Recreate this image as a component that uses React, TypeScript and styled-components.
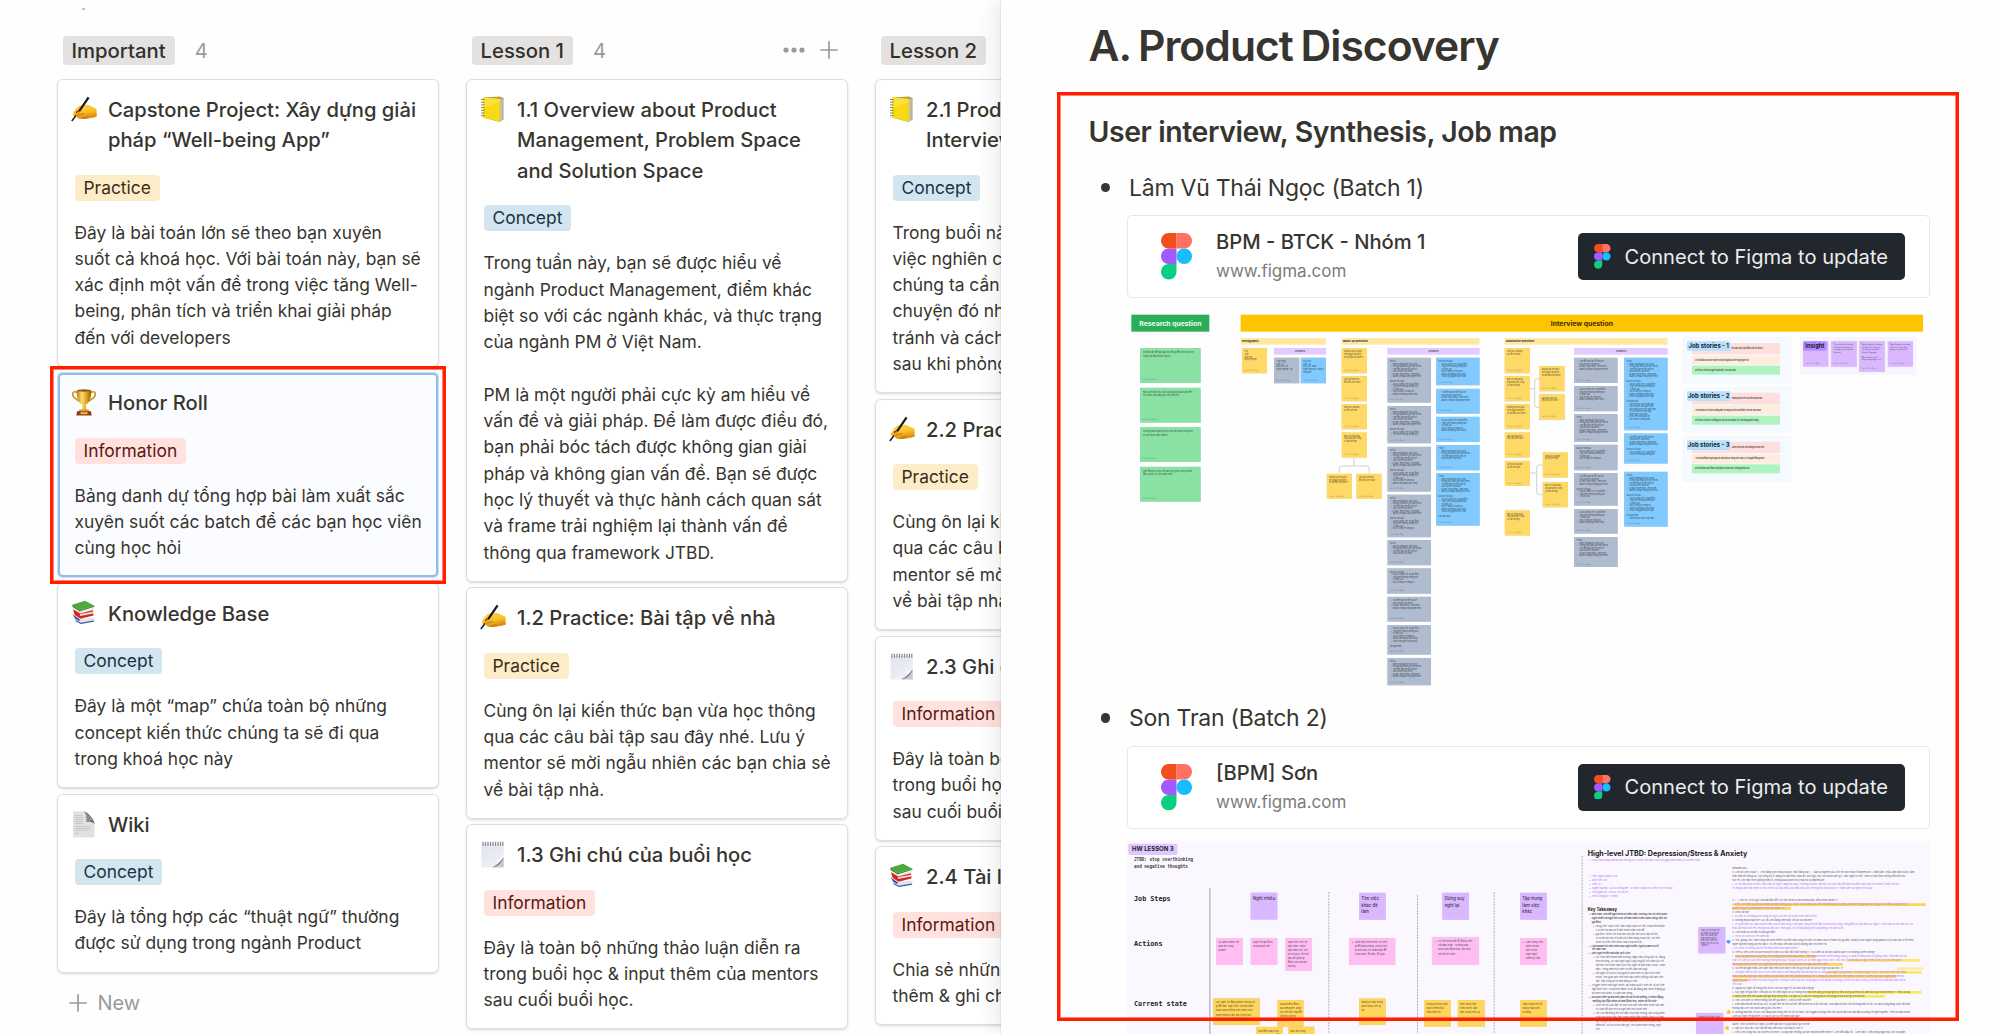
import React from "react";
import styled, { createGlobalStyle } from "styled-components";

const GlobalStyle = createGlobalStyle`
  * { box-sizing: border-box; }
  html, body { margin: 0; padding: 0; background: #fff; overflow: hidden; }
  body {
    font-family: Inter, "Liberation Sans", sans-serif;
    color: #37352f;
    -webkit-font-smoothing: antialiased;
  }
  p, h1, h2, h3, ul { margin: 0; padding: 0; font-weight: inherit; }
`;

/* ---------- shell ---------- */

const Screen = styled.main`
  display: flex;
  width: 2000px;
  height: 1034px;
  overflow: hidden;
  background: #fefefe;
  position: relative;
`;

const BoardPane = styled.section`
  flex: 0 0 1001px;
  display: flex;
  gap: 27px;
  padding: 36px 0 0 57px;
  height: 1034px;
  overflow: hidden;
`;

const DocPane = styled.section`
  flex: 1;
  position: relative;
  background: #fefefe;
  height: 1034px;
  padding: 20px 70.5px 0 87.5px;
  display: flex;
  flex-direction: column;
  box-shadow: 0 0 2px rgba(15, 15, 15, 0.16), -4px 0 22px rgba(15, 15, 15, 0.09);
`;

const Marker = styled.div<{ $x: number; $y: number; $w: number; $h: number }>`
  position: absolute;
  left: ${(p) => p.$x}px;
  top: ${(p) => p.$y}px;
  width: ${(p) => p.$w}px;
  height: ${(p) => p.$h}px;
  border: 3px solid #ff1e00;
  outline: 1px solid rgba(255, 30, 0, 0.55);
  outline-offset: -4px;
  pointer-events: none;
`;

const Speck = styled.span`
  position: absolute;
  left: 82px;
  top: 8px;
  width: 3px;
  height: 2px;
  background: #c4c4c4;
`;

/* ---------- kanban board ---------- */

const Column = styled.div`
  flex: 0 0 382px;
  display: flex;
  flex-direction: column;
`;

const ColumnHead = styled.header`
  display: flex;
  align-items: center;
  height: 28.5px;
  margin: 0 6px 14px 5.5px;
  color: #9b9a97;
`;

const ColumnName = styled.span`
  background: #e3e2e0;
  color: #32302c;
  border-radius: 4px;
  height: 28.5px;
  line-height: 29px;
  padding: 0 9px;
  font-size: 20.3px;
  font-weight: 500;
  white-space: nowrap;
`;

const Count = styled.span`
  font-size: 20.3px;
  margin-left: 20px;
  color: #9b9a97;
`;

const HeadActions = styled.span`
  margin-left: auto;
  display: flex;
  align-items: center;
  gap: 15px;
  margin-right: 4px;
`;

const Stack = styled.div`
  display: flex;
  flex-direction: column;
  gap: 5.4px;
`;

const Card = styled.article<{ $selected?: boolean }>`
  flex: none;
  background: ${(p) => (p.$selected ? "#fbfcff" : "#fff")};
  border-radius: 6px;
  padding: 16px 10px 16px 17.5px;
  box-shadow: ${(p) =>
    p.$selected
      ? "inset 0 0 0 1px #d9dee6, inset 0 0 0 3px #8fbcee"
      : "inset 0 0 0 1px #dededd, 0 1px 2px rgba(15,15,15,0.13), 0 2px 5px rgba(15,15,15,0.03)"};
`;

const TitleRow = styled.div`
  display: flex;
  align-items: flex-start;
  margin-left: -3.5px;
`;

const IconSlot = styled.span`
  flex: 0 0 37px;
  height: 30.8px;
  padding-top: 1px;
  display: block;
`;

const CardTitle = styled.h3`
  font-size: 20.2px;
  line-height: 30.8px;
  font-weight: 500;
  white-space: pre;
`;

const tones = {
  Practice: ["#fdecc8", "#402c1b"],
  Concept: ["#d3e5ef", "#183347"],
  Information: ["#ffe2dd", "#5d1715"],
} as const;
type Tone = keyof typeof tones;

const Tag = styled.span<{ $tone: Tone }>`
  display: block;
  width: max-content;
  height: 26px;
  line-height: 26.5px;
  padding: 0 9px;
  margin: 18.5px 0 19px;
  border-radius: 4px;
  font-size: 17.4px;
  background: ${(p) => tones[p.$tone][0]};
  color: ${(p) => tones[p.$tone][1]};
`;

const Desc = styled.p`
  font-size: 17.42px;
  line-height: 26.3px;
  white-space: pre;
`;

const NewButton = styled.div`
  display: flex;
  align-items: center;
  gap: 11px;
  height: 30px;
  margin: 15px 0 0 11.5px;
  font-size: 20px;
  color: #9b9a97;
`;

/* ---------- icons ---------- */

const Plus = () => (
  <svg width="18" height="18" viewBox="0 0 18 18" stroke="#9b9a97" strokeWidth="1.7" fill="none">
    <path d="M9 0.3V17.7M0.3 9H17.7" />
  </svg>
);

const Dots = () => (
  <svg width="22" height="6" viewBox="0 0 22 6" fill="#9b9a97">
    <circle cx="3" cy="3" r="2.6" />
    <circle cx="11" cy="3" r="2.6" />
    <circle cx="19" cy="3" r="2.6" />
  </svg>
);

const HandIcon = () => (
  <svg width="27" height="26" viewBox="0 0 27 26">
    <defs>
      <linearGradient id="skin" x1="0" y1="0" x2="0.3" y2="1">
        <stop offset="0" stopColor="#ffd54a" />
        <stop offset="0.6" stopColor="#fcbf26" />
        <stop offset="1" stopColor="#d98a12" />
      </linearGradient>
    </defs>
    <path
      d="M2 18.4C2.6 15.2 5.6 11.6 8.6 9.6c1.200-.8 2.500-.5 2.700.4 1.800-1 4.400-1.800 6.300-1.100 2.800 1 5.400 3 7.900 3.900l.3 7.700c-1.800 1.100-4.200.9-6.200 1.600-3.800 1.200-8.400 1.100-11.900.3-1.300-.4-2-1.400-1.900-2.300-1.700.1-3.700-.1-3.800-1.700z"
      fill="url(#skin)"
    />
    <path d="M6 20c2-1.600 4.600-2.200 7.200-2.300M11.500 22.300c1.800-.4 3.600-1 5-1.900" stroke="#b86b10" strokeWidth=".9" fill="none" />
    <path d="M17.600 1.300 8.400 14.800l-2.900 2.400" stroke="#1b1b1d" strokeWidth="2.300" fill="none" />
    <path d="M5 19.500.8 25" stroke="#1b1b1d" strokeWidth="1.500" fill="none" />
    <path d="M8.500 15.500c-1.700.9-3 2.300-3.800 3.700" stroke="#e69a17" strokeWidth="1.800" fill="none" />
  </svg>
);

const NotebookIcon = () => (
  <svg width="26" height="27" viewBox="0 0 26 27">
    <path d="M3 1.500 20 .5l4 1.800v21L19.500 26 3 21.500z" fill="#b9a23a" />
    <path d="M19.600 3.300 24 2.200v21L19.700 26z" fill="#d9d4bd" />
    <path d="m21 3 0 22M22.600 2.600v21.500" stroke="#8d8871" strokeWidth=".5" />
    <path d="M3 1.200 19.800 3v22.700L3 21.600z" fill="#f7da14" />
    <path d="M3 1.200 19.800 3v3L3 12z" fill="#fbe64a" opacity=".7" />
    <path
      d="M1 3.500h3.600M1 6.200h3.600M1 8.900h3.600M1 11.600h3.600M1 14.300h3.600M1 17h3.600M1 19.700h3.600"
      stroke="#8f8450"
      strokeWidth="1"
    />
  </svg>
);

const TrophyIcon = () => (
  <svg width="26" height="27" viewBox="0 0 26 27">
    <defs>
      <linearGradient id="gold" x1="0" x2="1">
        <stop offset="0" stopColor="#b9780f" />
        <stop offset=".35" stopColor="#fbe26b" />
        <stop offset=".7" stopColor="#dd9d1c" />
        <stop offset="1" stopColor="#9a5d08" />
      </linearGradient>
    </defs>
    <path d="M6.500 3.500C3 1.800 1 3.300 1.800 6.300c.8 3 4 4.600 7.400 6.300M19.500 3.500C23 1.800 25 3.300 24.200 6.300c-.8 3-4 4.600-7.400 6.300" fill="none" stroke="#c98d1b" strokeWidth="1.500" />
    <path d="M5.800 1.200h14.400c.3 6.500-1.200 12-5.500 14.600l.6 5.200h-4.600l.6-5.200C7 13.200 5.500 7.700 5.800 1.200z" fill="url(#gold)" />
    <ellipse cx="13" cy="1.500" rx="7.200" ry="1.200" fill="#8f5a0b" />
    <path d="M8.200 20.500h9.600l.8 2H7.400z" fill="#d79a22" />
    <path d="M6 22.300h14l.7 4.200H5.300z" fill="#8c3f15" />
    <path d="M9.500 23.200h7v2h-7z" fill="#e9bd4a" />
  </svg>
);

const BooksIcon = () => (
  <svg width="26" height="25" viewBox="0 0 26 25">
    <path d="M2 15.500 4.500 21l5 2.600L23.500 21v-3.400L9 19z" fill="#dfe3ea" />
    <path d="M1.800 14.500 9 19.500l-.6 1.500-4-2zM4.500 21.200 10 24l12.800-2.200V20.600L10 22.700l-5-2.500z" fill="#39579f" />
    <path d="M2.300 9.500 9 13l13.500-2.500v4.300L9.700 18 3.600 13.500z" fill="#e9e1de" />
    <path d="M2 9.200 9 12l13-2v1.800L9.200 14 8.800 16l13.600-2.400v1.900L9.500 18.700 3.600 15z" fill="#d8251f" />
    <path d="M1.500 5.500 8 11.700l14.800-4.300V10L9 13.500 2 9z" fill="#e6efe2" />
    <path d="M1.200 4.700 14 .8l9.400 5L9 10.200z" fill="#4fa83d" />
    <path d="M1.200 4.700 9 10.200v1.400L1.700 7z" fill="#2f7d26" />
    <path d="m9 10.200 14.400-4.400v.9L9 11.300z" fill="#2f7d26" />
  </svg>
);

const PageIcon = () => (
  <svg width="26" height="27" viewBox="0 0 26 27">
    <path d="M2 .5h11.500c4 1.600 9 7.500 10 12.200v13.800H2z" fill="#e1e1e1" />
    <path d="M13.300.5c2.500 3.200 2.600 7.200 2.300 10.300 3-.8 6.500 0 8 2.400C23 8 17.500 1.800 13.300.5z" fill="#5f5f5f" />
    <path d="M13.300.5c2.500 3.200 2.600 7.200 2.300 10.300L22 9.500C20 5.500 16.500 1.800 13.300.5z" fill="#8d8d8d" />
    <path d="M4 4.500h8M4 6.500h8.500M4 8.500h8.500M4 10.500h8.500M4 12.500h8M4 15.500h15M4 17.500h16M4 19h12M4 22.300h4" stroke="#bdbdbd" strokeWidth=".7" />
  </svg>
);

const NotepadIcon = () => (
  <svg width="26" height="27" viewBox="0 0 26 27">
    <defs>
      <linearGradient id="sheet" x1="0" y1="0" x2=".6" y2="1">
        <stop offset="0" stopColor="#dfe5ec" />
        <stop offset="1" stopColor="#eef0f4" />
      </linearGradient>
    </defs>
    <path d="M1.500 3h22.300v14L14 26.500H1.500z" fill="url(#sheet)" />
    <path d="M23.800 17v9.500H13z" fill="#c6cad0" />
    <path d="M23.800 16.500c-2 1.400-4 1.700-6.500 1.800.2 3-1.500 6.500-5 8.200 5.800-1 9.500-5.200 11.500-10z" fill="#6d737c" />
    <path d="M23.800 15.800c-2 1.600-4.300 2.200-7 2.300.5 2.600-.8 6-4.500 8.200 4.700-2 8.500-5.600 11.500-10.500z" fill="#f8f9fb" />
    <path d="M3 .8v4M5.500.8v4M8 .8v4M10.500.8v4M13 .8v4M15.500.8v4M18 .8v4M20.500.8v4M22.800.8v4" stroke="#85898f" strokeWidth="1.200" />
  </svg>
);

const icons = {
  hand: HandIcon,
  notebook: NotebookIcon,
  trophy: TrophyIcon,
  books: BooksIcon,
  page: PageIcon,
  notepad: NotepadIcon,
};

const FigmaLogo = ({ width }: { width: number }) => (
  <svg width={width} height={width * 1.5} viewBox="0 0 200 300">
    <path d="M50 300c27.600 0 50-22.400 50-50v-50H50c-27.600 0-50 22.400-50 50s22.400 50 50 50z" fill="#0acf83" />
    <path d="M0 150c0-27.600 22.400-50 50-50h50v100H50c-27.600 0-50-22.400-50-50z" fill="#a259ff" />
    <path d="M0 50C0 22.400 22.400 0 50 0h50v100H50C22.400 100 0 77.600 0 50z" fill="#f24e1e" />
    <path d="M100 0h50c27.600 0 50 22.400 50 50s-22.400 50-50 50h-50V0z" fill="#ff7262" />
    <path d="M200 150c0 27.600-22.400 50-50 50s-50-22.400-50-50 22.400-50 50-50 50 22.400 50 50z" fill="#1abcfe" />
  </svg>
);

/* ---------- kanban data ---------- */

type CardData = { icon: keyof typeof icons; title: string; tag: Tone; text: string; selected?: boolean };

const columns: { name: string; count?: number; actions?: boolean; add?: boolean; cards: CardData[] }[] = [
  {
    name: "Important",
    count: 4,
    add: true,
    cards: [
      {
        icon: "hand",
        title: "Capstone Project: Xây dựng giải\npháp “Well-being App”",
        tag: "Practice",
        text: "Đây là bài toán lớn sẽ theo bạn xuyên\nsuốt cả khoá học. Với bài toán này, bạn sẽ\nxác định một vấn đề trong việc tăng Well-\nbeing, phân tích và triển khai giải pháp\nđến với developers",
      },
      {
        icon: "trophy",
        title: "Honor Roll",
        tag: "Information",
        selected: true,
        text: "Bảng danh dự tổng hợp bài làm xuất sắc\nxuyên suốt các batch để các bạn học viên\ncùng học hỏi",
      },
      {
        icon: "books",
        title: "Knowledge Base",
        tag: "Concept",
        text: "Đây là một “map” chứa toàn bộ những\nconcept kiến thức chúng ta sẽ đi qua\ntrong khoá học này",
      },
      {
        icon: "page",
        title: "Wiki",
        tag: "Concept",
        text: "Đây là tổng hợp các “thuật ngữ” thường\nđược sử dụng trong ngành Product",
      },
    ],
  },
  {
    name: "Lesson 1",
    count: 4,
    actions: true,
    cards: [
      {
        icon: "notebook",
        title: "1.1 Overview about Product\nManagement, Problem Space\nand Solution Space",
        tag: "Concept",
        text: "Trong tuần này, bạn sẽ được hiểu về\nngành Product Management, điểm khác\nbiệt so với các ngành khác, và thực trạng\ncủa ngành PM ở Việt Nam.\n\nPM là một người phải cực kỳ am hiểu về\nvấn đề và giải pháp. Để làm được điều đó,\nbạn phải bóc tách được không gian giải\npháp và không gian vấn đề. Bạn sẽ được\nhọc lý thuyết và thực hành cách quan sát\nvà frame trải nghiệm lại thành vấn đề\nthông qua framework JTBD.",
      },
      {
        icon: "hand",
        title: "1.2 Practice: Bài tập về nhà",
        tag: "Practice",
        text: "Cùng ôn lại kiến thức bạn vừa học thông\nqua các câu bài tập sau đây nhé. Lưu ý\nmentor sẽ mời ngẫu nhiên các bạn chia sẻ\nvề bài tập nhà.",
      },
      {
        icon: "notepad",
        title: "1.3 Ghi chú của buổi học",
        tag: "Information",
        text: "Đây là toàn bộ những thảo luận diễn ra\ntrong buổi học & input thêm của mentors\nsau cuối buổi học.",
      },
    ],
  },
  {
    name: "Lesson 2",
    cards: [
      {
        icon: "notebook",
        title: "2.1 Product\nInterview",
        tag: "Concept",
        text: "Trong buổi này\nviệc nghiên cứu\nchúng ta cần\nchuyện đó như\ntránh và cách\nsau khi phỏng",
      },
      {
        icon: "hand",
        title: "2.2 Practice",
        tag: "Practice",
        text: "Cùng ôn lại kiến\nqua các câu bài\nmentor sẽ mời\nvề bài tập nhà.",
      },
      {
        icon: "notepad",
        title: "2.3 Ghi chú",
        tag: "Information",
        text: "Đây là toàn bộ\ntrong buổi học\nsau cuối buổi",
      },
      { icon: "books", title: "2.4 Tài liệu", tag: "Information", text: "Chia sẻ những\nthêm & ghi chú" },
    ],
  },
];

const NextCardEdge = styled.div`
  flex: none;
  height: 40px;
  border-radius: 6px;
  background: #fff;
  box-shadow: inset 0 0 0 1px #dededd;
`;

/* ---------- document ---------- */

const DocTitle = styled.h1`
  font-size: 42.6px;
  line-height: 52px;
  height: 52px;
  font-weight: 600;
  letter-spacing: -1px;
  word-spacing: -2px;
  white-space: nowrap;
`;

const DocSubtitle = styled.h2`
  font-size: 28.4px;
  line-height: 36px;
  height: 36px;
  font-weight: 600;
  letter-spacing: -0.4px;
  margin-top: 42px;
  white-space: nowrap;
`;

const Bullet = styled.p<{ $top: number }>`
  display: flex;
  align-items: center;
  height: 34px;
  margin: ${(p) => p.$top}px 0 10.5px 12px;
  font-size: 23px;
  line-height: 34px;
  letter-spacing: -0.25px;
  white-space: nowrap;
  &::before {
    content: "";
    width: 9.5px;
    height: 9.5px;
    border-radius: 50%;
    background: #37352f;
    margin-right: 19px;
  }
`;

const LinkCard = styled.div`
  flex: none;
  display: flex;
  align-items: center;
  height: 83px;
  margin-left: 38px;
  padding: 0 24px 0 33px;
  border: 1.5px solid #e6e6e5;
  border-radius: 5px;
  background: #fff;
`;

const LinkText = styled.div`
  margin-left: 24.5px;
  display: flex;
  flex-direction: column;
  gap: 3px;
`;

const LinkTitle = styled.span`
  font-size: 20.2px;
  line-height: 26px;
  font-weight: 500;
`;

const LinkHost = styled.span`
  font-size: 17px;
  line-height: 26px;
  color: #7d7c79;
`;

const ConnectButton = styled.span`
  margin-left: auto;
  display: flex;
  align-items: center;
  gap: 14px;
  width: 327px;
  height: 47px;
  padding-left: 16.5px;
  border-radius: 5px;
  background: #22272d;
  color: #ededed;
  font-size: 20.1px;
  white-space: nowrap;
`;

const Embed = styled.div<{ $h: number; $bg: string }>`
  flex: none;
  position: relative;
  height: ${(p) => p.$h}px;
  margin: 12.5px 0 0 38px;
  overflow: hidden;
  background: ${(p) => p.$bg};
`;

/* Whiteboards are laid out on a large canvas and shown at one third. */
const Canvas = styled.div<{ $ox: number; $oy: number }>`
  position: absolute;
  left: 0;
  top: 0;
  width: 2600px;
  height: 1200px;
  transform-origin: 0 0;
  transform: scale(0.33333) translate(${(p) => -p.$ox}px, ${(p) => -p.$oy}px);
`;

type Box = { $x: number; $y: number; $w: number; $h: number; $c?: string };

const Note = styled.div<Box & { $size?: number; $pad?: number; $lh?: number; $fixed?: boolean; $ink?: string }>`
  position: absolute;
  left: ${(p) => p.$x}px;
  top: ${(p) => p.$y}px;
  width: ${(p) => p.$w}px;
  height: ${(p) => p.$h}px;
  background: ${(p) => p.$c};
  padding: ${(p) => p.$pad ?? 7}px;
  font-size: ${(p) => p.$size ?? 6.4}px;
  line-height: ${(p) => (p.$lh ? `${p.$lh}px` : 1.25)};
  font-weight: 500;
  color: ${(p) => p.$ink ?? "rgba(30, 30, 30, 0.72)"};
  white-space: ${(p) => (p.$fixed ? "pre" : "pre-line")};
  box-shadow: 0 0 3px rgba(0, 0, 0, 0.12);
`;

const Author = styled.span`
  position: absolute;
  left: 7px;
  bottom: 5px;
  font-size: 5px;
  color: rgba(30, 30, 30, 0.42);
`;

const Band = styled.div<Box & { $size: number; $fg?: string; $align?: string; $r?: number; $pad?: number }>`
  position: absolute;
  left: ${(p) => p.$x}px;
  top: ${(p) => p.$y}px;
  width: ${(p) => p.$w}px;
  height: ${(p) => p.$h}px;
  line-height: ${(p) => p.$h}px;
  background: ${(p) => p.$c};
  font-size: ${(p) => p.$size}px;
  font-weight: 700;
  color: ${(p) => p.$fg ?? "#222"};
  text-align: ${(p) => p.$align ?? "center"};
  border-radius: ${(p) => p.$r ?? 0}px;
  padding: 0 ${(p) => p.$pad ?? 0}px;
  white-space: nowrap;
`;

const CanvasText = styled.div<{ $x: number; $y: number; $size: number; $mono?: boolean; $c?: string; $b?: number; $lh?: number }>`
  position: absolute;
  left: ${(p) => p.$x}px;
  top: ${(p) => p.$y}px;
  font-size: ${(p) => p.$size}px;
  line-height: ${(p) => p.$lh ?? 20}px;
  font-family: ${(p) => (p.$mono ? '"DejaVu Sans Mono", "Liberation Mono", monospace' : "Inter, sans-serif")};
  font-weight: ${(p) => p.$b ?? 400};
  color: ${(p) => p.$c ?? "#222"};
  white-space: pre;
`;

/* A column of text lines; each line keeps its own indent and colour. */
const Lines = styled.div<{ $x: number; $y: number; $size: number }>`
  position: absolute;
  left: ${(p) => p.$x}px;
  top: ${(p) => p.$y}px;
  display: flex;
  flex-direction: column;
  align-items: flex-start;
  font-size: ${(p) => p.$size}px;
  white-space: pre;
`;

const Line = styled.span<{ $c: string; $b?: boolean; $in?: number; $lh?: number }>`
  height: ${(p) => p.$lh ?? 12}px;
  line-height: ${(p) => p.$lh ?? 12}px;
  padding-left: ${(p) => p.$in ?? 0}px;
  color: ${(p) => p.$c};
  font-weight: ${(p) => (p.$b ? 600 : 400)};
`;

const Rule = styled.div<{ $x: number; $y: number; $h: number; $solid?: boolean }>`
  position: absolute;
  left: ${(p) => p.$x}px;
  top: ${(p) => p.$y}px;
  height: ${(p) => p.$h}px;
  border-left: ${(p) => (p.$solid ? "5px solid #c4c2c8" : "3px dashed #b3b1b8")};
`;

const Overlay = styled.svg`
  position: absolute;
  left: 0;
  top: 0;
`;

const Y = "#ffd966";
const GR = "#afbccf";
const BL = "#80caff";
const GN = "#8ae1a4";
const PU = "#d9b8ff";
const PK = "#ffbdf2";

const q = [
  "Những câu hỏi giúp\nhiểu người dùng khi\nhọ bắt đầu thói quen?",
  "Lần cuối bạn làm\nđiều đó là khi nào?",
  "Cảm xúc của bạn\nlúc đó thế nào?",
  "Bạn có từng dùng\nứng dụng hay công\ncụ nào không?",
];

const answerLines = [
  "Trả lời:",
  "  •  Mình thường khó tập trung",
  "  •  Không ngủ được khi nghĩ nhiều",
  "  •  Tìm đến bạn bè để chia sẻ",
  "      câu chuyện của mình",
  "  •  Đi dạo, nghe nhạc, xem phim",
  "  •  Muốn có người lắng nghe mình",
  "",
  "Sau khi trải qua:",
  "  •  Áp lực công việc và gia đình",
  "  •  Thử thiền nhưng không duy",
  "      trì được lâu",
  "  •  Hay lo lắng về tương lai",
  "  •  Muốn cân bằng cuộc sống",
  "  •  Chưa từng gặp chuyên gia",
  "",
  "Lần gần nhất:",
  "  •  Tập thể dục thấy thoải mái",
  "  •  Nói chuyện với người thân",
  "  •  Đọc sách phát triển bản thân",
  "      và viết nhật ký mỗi ngày",
  "  •  Nghỉ ngơi cuối tuần",
  "  •  Đi du lịch cùng bạn bè",
  "  •  Học thêm kỹ năng mới",
];

const clip = (h: number, i: number) => {
  const n = Math.max(3, Math.floor((h - 26) / 7.5));
  const start = h > 100 ? 0 : [0, 8, 3, 9][i % 4];
  return answerLines.slice(start, start + (h < 80 ? Math.min(n, 5) : n)).join("\n");
};

const research: [number, string][] = [
  [142, "Những vấn đề nào gây tác động đến thói quen tin\ncông của đa số mọi người?"],
  [261, "Đâu là những nhu cầu người dùng quan tâm đến\nkhi muốn cân bằng lại cuộc đời họ?"],
  [379, "Những quan ngại gì sẽ là cản trở người dùng duy\ntrì thói quen lành mạnh?"],
  [498, "Cần động lực như thế nào thì người dùng sẽ bắt\nđầu và duy trì thói quen mới?"],
];

const yellow: [number, number][] = [
  [695, 142], [695, 226], [695, 310], [695, 395], [650, 519], [739, 519],
  [1184, 142], [1184, 226], [1184, 310], [1184, 395], [1184, 480], [1184, 629],
  [1288, 196], [1288, 281], [1298, 455], [1298, 544],
];

const answers: [number, number, number, string][] = [
  [832, 171, 135, GR], [832, 316, 112, GR], [832, 438, 135, GR], [832, 582, 128, GR], [832, 718, 76, GR],
  [832, 803, 76, GR], [832, 888, 75, GR], [832, 973, 89, GR], [832, 1072, 82, GR],
  [978, 171, 83, BL], [978, 264, 75, BL], [978, 348, 76, BL], [978, 433, 76, BL], [978, 517, 158, BL],
  [1392, 171, 76, GR], [1392, 256, 76, GR], [1392, 340, 84, GR], [1392, 432, 77, GR], [1392, 517, 98, GR],
  [1392, 625, 74, GR], [1392, 709, 90, GR],
  [1542, 171, 218, BL], [1542, 398, 91, BL], [1542, 513, 165, BL],
];

const stories: { y: number; h: number; rows: [number, number, string, string, number][] }[] = [
  {
    y: 111, h: 134,
    rows: [
      [127, 34, "#ffdfdd", "tôi cảm thấy cần được hỗ trợ tâm lý", 118],
      [165, 27, "#ffecdc", "Để tôi được chia sẻ và kết nối với người có thể lắng nghe tôi", 10],
      [195, 27, "#aff4c0", "Để tôi có thể suy nghĩ thoải mái, tích cực hơn", 10],
    ],
  },
  {
    y: 261, h: 133,
    rows: [
      [276, 35, "#ffdfdd", "muốn phát triển và hiểu mình hơn", 120],
      [314, 28, "#ffecdc", "Tôi muốn có lộ trình hướng dẫn rõ ràng và theo dõi được tiến bộ của mình", 10],
      [345, 27, "#aff4c0", "Để tôi có thể duy trì động lực và tạo thói quen tốt, cân bằng cuộc sống", 10],
    ],
  },
  {
    y: 408, h: 134,
    rows: [
      [423, 34, "#ffdfdd", "cảm thấy mất cân bằng khi làm việc", 120],
      [461, 27, "#ffecdc", "Tôi muốn được nghỉ ngơi và sắp xếp lại công việc hợp lý, có người đồng hành", 10],
      [491, 27, "#aff4c0", "Để tôi kiểm soát được thời gian và cảm xúc, không bị quá tải", 10],
    ],
  },
];

const insights = [
  "",
  "Thói quen bị ảnh hưởng\nbởi điều kiện bạn bè và\nsự động viên lớn nhất là\nbản thân",
  "Người dùng có xu hướng\ntìm đến bạn bè khi gặp\nvấn đề và muốn được\nchia sẻ, lắng nghe\n\nMục tiêu lớn: người\ndùng muốn sống vui vẻ",
  "Người dùng có xu hướng\ntránh nói về vấn đề gì\ngiống với người thân",
];

const InterviewBoard = () => (
  <Embed $h={380} $bg="#fefefe">
    <Canvas $ox={51} $oy={31}>
      <Band $x={64} $y={42} $w={234} $h={51} $c="#2bae57" $size={20.500} $fg="#e9fff0">Research question</Band>
      <Band $x={392} $y={42} $w={2047} $h={51} $c="#ffc400" $size={20.500} $fg="#3a2e08">Interview question</Band>
      {research.map(([y, t]) => (
        <Note key={y} $x={90} $y={y} $w={182} $h={105} $c={GN} $size={6.500} $pad={9} $lh={10} $fixed>
          {t}
          <Author>Lâm Vũ Thái Ngọc</Author>
        </Note>
      ))}
      <Band $x={392} $y={112} $w={255} $h={20} $c="#ffe8a0" $size={7.800} $align="left" $pad={3}>Demographic</Band>
      <Band $x={695} $y={112} $w={413} $h={20} $c="#ffe8a0" $size={7.800} $align="left" $pad={3}>Warm-up questions</Band>
      <Band $x={1184} $y={112} $w={488} $h={20} $c="#ffe8a0" $size={7.800} $align="left" $pad={3}>Substantive questions</Band>
      <Band $x={492} $y={142} $w={156} $h={20} $c="#e3cbff" $size={7.200} $fg="#5a5066">Answers</Band>
      <Band $x={832} $y={142} $w={277} $h={20} $c="#e3cbff" $size={7.200} $fg="#5a5066">Answers</Band>
      <Band $x={1392} $y={142} $w={281} $h={20} $c="#e3cbff" $size={7.200} $fg="#5a5066">Answers</Band>
      <Note $x={396} $y={142} $w={75} $h={76} $c={Y} $size={6} $lh={8} $fixed>{"Tên\nTuổi\nGiới tính\nNghề nghiệp"}<Author>Lâm Vũ Thái Ngọc</Author></Note>
      <Note $x={492} $y={171} $w={76} $h={77} $c={GR} $size={6} $lh={8} $fixed>{"Thu Hằng\nTuổi: 25\nGiới tính: Nữ\nNghề nghiệp: HR"}<Author>Lâm Vũ Thái Ngọc</Author></Note>
      <Note $x={572} $y={171} $w={76} $h={77} $c={BL} $size={6} $lh={8} $fixed>{"Duy Anh\nTuổi: 28\nGiới tính: Nam\nNghề nghiệp: Product\nDesigner"}<Author>Lâm Vũ Thái Ngọc</Author></Note>
      {yellow.map(([x, y], i) => (
        <Note key={i} $x={x} $y={y} $w={76} $h={76} $c={Y} $size={5.600} $lh={8} $fixed>
          {q[i % q.length]}
          <Author>Lâm Vũ Thái Ngọc</Author>
        </Note>
      ))}
      {answers.map(([x, y, h, c], i) => (
        <Note key={i} $x={x} $y={y} $w={131} $h={h} $c={c} $size={5.800} $lh={7.500} $fixed>
          {clip(h, i)}
          <Author>Lâm Vũ Thái Ngọc</Author>
        </Note>
      ))}
      <Overlay width="2600" height="1200" viewBox="0 0 2600 1200" fill="none" stroke="#b9b9b9" strokeWidth="2">
        <path d="M732 472v24M732 496h-36q-8 0-8 8v13M732 496h38q8 0 8 8v13" />
        <path d="M1260 264h14M1288 234h-6q-8 0-8 8v70q0 8 8 8h6" />
        <path d="M1260 517h18M1298 493h-10q-8 0-8 8v72q0 9 8 9h10" />
      </Overlay>
      {stories.map((s, i) => (
        <React.Fragment key={s.y}>
          <Note $x={1721} $y={s.y} $w={320} $h={s.h} $c="#f4faff" />
          {s.rows.map(([y, h, c, t, pad]) => (
            <Band key={y} $x={1746} $y={y} $w={264} $h={h} $c={c} $size={5.600} $pad={pad} $align="left" $fg="#4c4848">
              {t}
            </Band>
          ))}
          <Band $x={1731} $y={s.y + 11} $w={130} $h={29} $c="#b9e1fd" $size={17.800} $r={4} $fg="#10202c">{`Job stories - ${i + 1}`}</Band>
        </React.Fragment>
      ))}
      <Note $x={2071} $y={111} $w={347} $h={110} $c="#f9f5ff" />
      {[2079, 2164, 2248, 2333].map((x, i) => (
        <Note key={x} $x={x} $y={122} $w={76} $h={i === 2 ? 91 : 76} $c={PU} $size={5.200} $lh={7.500} $fixed>
          {insights[i]}
          <Author>Lâm Vũ Thái Ngọc</Author>
        </Note>
      ))}
      <Band $x={2079} $y={122} $w={71} $h={28} $c="#b38dff" $size={17} $r={4} $fg="#1d1238">Insight</Band>
    </Canvas>
  </Embed>
);

const ink = "#5c5a63";
const vio = "#b074f2";

/* Lines of the transcript, top to bottom; an empty string is a blank line. */
const transcript: [string, string][] = [
  [ink, "Detailed Q&A"],
  [ink, "S: Linh ăn cơm chưa? (...) Em đang học khoá product, thầy đang dạy (...) Đây là nghiên cứu Linh về chọn topic ở depression - trầm cảm. Khẩu cảm thấy buồn, cảm"],
  [ink, "thấy mất hết động lực, vui hứng thú ở. Đang thì cảm thấy chán ăn, khó ngủ, học cho muốn làm gì ý. Đây nghe có thể. Theo tư vấn được những điều đó như"],
  [ink, "này thì Linh thấy mình giống nhiều ở, không qua là làm chứ chưa nói là depression."],
  [vio, "L: Ờ. Giờ đặt được là mức trầm cảm tôi nghe càng hợi càng. Thường là buồn, bất mọi thứ cho thấy để tâm mọi điều cảm thận thì chưa ở. Nhiều khi em"],
  [vio, "thì mang cảm thấy mình bị như thế rồi có dấu hiệu của trầm cảm luôn, nhưng mà vẫn là mức tự “trầm cảm” lại nghe nó to quá."],
  [ink, ""],
  [ink, ""],
  [ink, "S: (...) Vậy thì, từ lúc giờ Linh bắt đầu để ý có việc mình bị burn mood xấu, kiểu down mood ý?"],
  [vio, "L: Kiểu Linh hiện ra cảm xúc mình là thất thường quá. Trước kia thì cảm xúc vẫn còn đang bình thường, mà mấy tháng nay nay đúng lúc tôi đều lại nghĩ rồi có"],
  [vio, "ghiền xong rồi lại đúng mình khó luôn được cơ"],
  [ink, "S: Khóc cả hả?"],
  [vio, "L: Ờ, kiểu lúc đó đang xem xong thì nghĩ, hơn liên rồi muốn nước mắt rơi lên"],
  [ink, "S: Nhưng mà tại sao nhỉ? Lúc đó Linh đang xem mấy vở clip vui mà nhỉ?"],
  [vio, "L: Họ phải biểu lúc cấp ra buồn đầu, mà là xem xong 1 thời gian, xong thì bắt đầu tua hơn lớp trong, trong đầu lúc bắt đầu suy nghĩ ý. Kiểu cảm lúc đó cảm xúc nó"],
  [vio, "thay đổi nhịp nhìn lên, nhưng mà kiểu này 1 thời gian, có thì phải đang nổi xong động 1 rồi luôn luôn."],
  [ink, "S: Linh nhận ra cái đấy từ bao giờ đấy?"],
  [vio, "L: Thực ra từ thời tụi Tết năm nay"],
  [ink, "S: Ừm, giống Linh, thấy trong Tết mình reflect lại kiểu thân xong thì thấy có năm chia có thành tựu gì mấy, xong thì mọi người xung quanh có thì sao vậy từ ổn định,"],
  [ink, "nghề nghiệp tương lai như nào ý, có vẻ chưa, kiểu mọi thứ đi đường này cho mình thì"],
  [vio, "L: Ờ, chính vì những câu hỏi đó mà khiến mình nghĩ nhiều ý"],
  [ink, "S: Thế cụ việc Linh có burn mood thì cảm xúc thay đổi thất thường ý, vì có diễn ra với tần suất ra sao? Có thường xuyên không?"],
  [vio, "L: Thực ra ngày nào cũng thấy thế, nhưng mức độ sẽ khác nhau. Hôm nào mà mình bị kết tương xuống, có phải là đứng nào thì giống nhau. Tiếp nào nói với"],
  [vio, "khác thì vẫn vui cười bình thường nhưng mà quay đi quay lại thì lúc lại trầm ngay được luôn. Kiểu thực sự nào đầu óc nghĩ nhiều ở thì cơ gì nó làm buồn"],
  [vio, "đều nghĩ luyện thuyên. Suy nghĩ linh tinh thực sự, mọi người nói họ bảo hơi nhạy cảm"],
  [ink, "S: Có thể lần gần nhất Linh cảm thấy thế là khi nào? Kiểu nó gì nó xảy ra và suy nghĩ tại sao này, ý?"],
  [vio, "L: Lần gần nhất thì hơi chờ có với chiều luôn á vẫn đang phải làm bài tập hay là xong làm người xung quanh, nhưng mà nghĩ nó cả 1 năm qua mình làm được"],
  [vio, "như chả kiểu như nào, mặc chở có ra với được tạo nên cái để làm được thì ý. đúng rồi, mọi lần hết tiền nghĩ ra “cả như” là kiểu mình lại bị giam vào mớ này"],
  [vio, "người này cơ. Rồi mình hơi nào cũng kiểu? Trong thì kiểu bạn học xong nghĩ ra với lớp đã và tương vị mình sẽ vẫn có một gì tốt để khỏi, phải làm điều hỏi là"],
  [vio, "việc nào"],
  [ink, "S: Ngoài suy nghĩ về công việc ra thì còn suy nghĩ về cái nào nữa không?"],
  [ink, "L: Suy nghĩ về gia đình. Kiểu đôi lúc thì kiểu nghĩ với cứ nhưng mà kiểu tình làm gì cũng nghĩ thì kiểu tương lai mình cố làm được gì cho bố mẹ ấy ý. Hiểu tại sao,"],
  [ink, "vì nhiều này lệnh liên quan vẫn gia đình mình mới. Tụy giờ cơ 2 tuổi thì nhưng mà cơ lệ tương thì bà mình gì cho bố mẹ."],
  [ink, "S: Cho Linh biết có mình những vấn đề gia đình ý, Linh có thể chia sẻ?"],
  [ink, "L: Kiểu đâu mà bố mẹ đi du lịch, thì giới liên về cho bố mẹ, để bố mẹ ta có đi chơi này. Nhà đâu bố mẹ Linh ở tương mối có tôi, có năm cũng đóng cuộc đời mới"],
  [ink, "nhưng mà Linh với muốn làm gì đó cho mẹ ý."],
  [ink, "S: Nhưng mà kiểu, từ lúc Linh đang làm công việc thì rồi có dấu 1 với trigger là công việc lên, ba nó đã Linh bắt đầu là căng vẻ nghề nghiệp. Thế còn bao muốn"],
  [ink, "Linh suy nghĩ về gia đình, có cái gì vậy cơ trở thành bây giờ?"],
  [ink, ""],
  [ink, "Năm ý, thói tự mình suy nghĩ, có biết sao này có giúp được gì cho mẹ."],
  [ink, "S: Đây là ý sau vậy, còn vấn đề nào kiểu thay của nào ở Linh ý?"],
  [ink, "L: Kiểu Linh cũng học và chuyên với mình ý, xong thấy những cái này mà phải thiết mình ý. Linh kiểu đâu rồi... Linh thấy). Kiểu nóng ngày hơi Linh với phân"],
];

const highlights: [number, number, number, string][] = [
  [580, 221, 578, "#ffd259"], [577, 232, 176, "#ffd259"], [585, 376, 244, "#ffd259"], [920, 388, 220, "#ffe766"],
  [577, 400, 332, "#ffd259"], [1070, 413, 80, "#ffec9c"], [860, 424, 285, "#ffe766"], [577, 436, 492, "#ffd259"],
  [577, 448, 48, "#ffd259"], [805, 484, 340, "#f7ec58"], [577, 496, 458, "#f7ec58"],
];

const takeaway: [number, string, boolean?][] = [
  [0, "•  Bản thân Linh dễ nghĩ mình bị trầm cảm, nhưng Linh có thói quen", true],
  [8, "nghĩ nhiều và nghĩ tiêu cực về bản thân ở bên cạnh công việc và", true],
  [8, "gia đình", true],
  [12, "•  công việc: xoay việc thân nhận xoát với thể, chưa kiểm được"],
  [20, "lí xuyên do bạn là ở vẫn muốn trầm hơn để"],
  [12, "•  gia đình: mình lớn như này mà vẫn nay phụ cấp bố mẹ,"],
  [20, "lo xuyên tốt hay tổ phải với kiếm năng chưa tính, chi biết"],
  [20, "mình có kiểu hiểu được nhà chưa mẹ hả"],
  [0, "•  Linh aware tôi việc mình hay nghĩ nhiều, nghĩ quanh dù từ", true],
  [8, "Tết năm nay", true],
  [0, "•  Việc nghĩ nhiều khá xảy ra ở Linh:", true],
  [12, "•  Có Thay đổi mood thất thường (ngày nào cũng xảy ra), đang"],
  [20, "bình thường, lúc sau nghĩ ngợi lung tung đủ thứ cảm xúc về"],
  [20, "thể xảy cho nước mắt còn chút nghĩ về bản thân, buồn, chán"],
  [20, "nản). Từng kém thức biết có kết luận kéo ngủ"],
  [12, "•  Dễ Nghĩ vớ và tích và người bị phía trên tự sâu chút thiết"],
  [20, "nhiều, thói gian làm việc hơn bay nhiều tưởng suất làm việc"],
  [20, "vậy. cần vọng lại thì làm đang lo thế)."],
  [0, "•  Trigger khiến nhà nghĩ nhiều: áp thành quả ý nhìn kế, là với việc"],
  [8, "nghĩ anh trinh, chưa nhìn đánh có ai đã đang làm mình ở đang gì"],
  [8, "do theo thói quen, tự cảm hay nàng"],
  [0, "•  Solution hiện tại khi mới cảm lên là từ mở miếng, vì mình đang", true],
  [8, "“Những câu đầu mình sẽ làm được mọi, mình sẽ ổn thôi”", true],
  [12, "•  Linh chỉ nói câu đầy thì mới Linh biết tiếp theo mình cần làm"],
  [20, "cư soát để làm cho là nghĩ một thói quen mới"],
  [12, "•  Với Linh đã động lên thư đầu của thân nhưng, lần xung phân"],
  [20, "trước ăn dùng vào việc dùng nhiều điều nhiều được vui tâm"],
  [20, "tập trung vì tin về việc nhiều của điều, mọi việc thích hơn"],
  [20, "điểm đó, chủ là chính bản ghi, thói quen nhà trường, nghĩ"],
  [20, "vực"],
];

const steps: [number, number, string][] = [
  [422, 80, "Nghĩ nhiều"],
  [747, 80, "Tìm việc\nkhác để\nlàm"],
  [997, 80, "Dừng suy\nnghĩ lại"],
  [1230, 80, "Tập trung\nlàm việc\nkhác"],
];

const stickies: [number, number, number, number, string, string][] = [
  [318, 321, 80, 81, PK, "So sánh mình với\nbạn bè xung\nquanh"],
  [422, 321, 80, 81, PK, "Nghĩ về gia đình,\nthương bố mẹ"],
  [526, 321, 80, 98, PK, "Nghĩ tiêu cực về\nbản thân: mình\nthất kém cỏi, xét\nlại chi phí, về thời\nsau sẽ giúp gì\nđược cho bố mẹ\nkhông"],
  [717, 321, 139, 81, PK, " •  Xem tiếp theo mình có việc\n     gì để làm không: công việc,\n     là một bạn có nhắn nào để\n     chia mình, đi tắm, đi ngủ)"],
  [967, 319, 139, 82, PK, " •  Tự trở mình mới đi động viên\n     với bản thân: “Không sao,\n     mình làm được mà. Rồi mọi\n     thứ sẽ ổn thôi!”"],
  [1230, 321, 80, 81, PK, " •  Làm công việc\n     mình muốn\n     làm và ko\n     nghĩ ngợi\n     thêm gì nữa"],
  [310, 502, 139, 80, "#ffd65c", "Lúc nghĩ thì đang mình không có\ngì để làm, nghỉ lướt TikTok/nằm\nhoặc làm những việc theo thói\nquen mà ko cần tập trung suy\nnghĩ (nấu ăn, rửa bát, lái xe)"],
  [502, 507, 79, 80, "#ffd65c", "Chưa kiếm được\njob designer, phải\nxin tiền mẹ cấp để\ntrả mọi lương"],
  [438, 587, 80, 60, "#ffd65c", "Gia đình gây khó\nkhăn tài chính, để"],
  [534, 587, 79, 60, "#ffd65c", "Bạn bè cùng\nngành có việc rồi"],
  [747, 502, 80, 80, "#ffd65c", "Đang ko tập trung\nlàm công việc gì\ncả"],
  [942, 507, 81, 80, "#ffd65c", "Không muốn nghĩ\nngợi thêm nữa,\nthấy mệt rồi"],
  [1043, 507, 81, 80, "#ffd65c", "Biết rằng tiếp\ntheo mình cần\nlàm công việc gì"],
  [1230, 507, 80, 80, "#ffd65c", "Tâm trạng trở về\ntrạng thái bình\nthường"],
];

const JtbdBoard = () => (
  <Embed $h={194} $bg="#faf7ff">
    <Canvas $ox={51} $oy={30}>
      <Band $x={55} $y={38} $w={147} $h={34} $c="#dfc8ff" $size={18} $r={5}>HW LESSON 3</Band>
      <CanvasText $x={72} $y={77} $size={12.800} $mono $b={700} $c="#3c3a40">{"JTBD: stop overthinking\nand negative thoughts"}</CanvasText>
      <CanvasText $x={72} $y={192} $size={20.300} $mono $b={700}>Job Steps</CanvasText>
      <CanvasText $x={72} $y={328} $size={20.300} $mono $b={700}>Actions</CanvasText>
      <CanvasText $x={72} $y={509} $size={20.300} $mono $b={700}>Current state</CanvasText>
      <Rule $x={297} $y={171} $h={460} $solid />
      <Rule $x={655} $y={183} $h={450} />
      <Rule $x={921} $y={192} $h={440} />
      <Rule $x={1151} $y={183} $h={450} />
      <Rule $x={1415} $y={75} $h={560} />
      {steps.map(([x, w, t]) => (
        <Note key={x} $x={x} $y={185} $w={w} $h={81} $c={PU} $size={13} $lh={20} $fixed $ink="#3a2f4a">{t}</Note>
      ))}
      {stickies.map(([x, y, w, h, c, t]) => (
        <Note key={`${x}-${y}`} $x={x} $y={y} $w={w} $h={h} $c={c} $size={7.600} $lh={12.200} $fixed>{t}</Note>
      ))}

      <CanvasText $x={1433} $y={54} $size={21.300} $lh={26} $b={700}>High-level JTBD: Depression/Stress &amp; Anxiety</CanvasText>
      <Lines $x={1437} $y={83} $size={7.400}>
        <Line $c={vio}>•  Linh chưa từng Depression nhưng suy thì sẽ, tìm hiểu Linh còn gặp phải Stress &amp; Anxiety nữa</Line>
      </Lines>
      <Lines $x={1437} $y={129} $size={7.800}>
        <Line $c={vio}>•  Tên: Ngô Khánh Linh</Line>
        <Line $c={vio}>•  Giới tính: Nữ</Line>
        <Line $c={vio}>•  Tuổi: 21</Line>
        <Line $c={vio}>•  Nghề nghiệp: UX/UI Designer,  sv năm 3 đại học Kiến Trúc Hà Nội</Line>
        <Line $c={vio}>•  Thời gian pv: 21h30, T6 10/09</Line>
        <Line $c={vio}>•  Thời lượng pv: 45min</Line>
      </Lines>
      <CanvasText $x={1433} $y={228} $size={12.500} $lh={17} $b={700}>Key Takeaway</CanvasText>
      <Lines $x={1437} $y={243} $size={7.300}>
        {takeaway.map(([dx, t, b], i) => (
          <Line key={i} $c={b ? "#3f3d46" : ink} $b={b} $in={dx} $lh={11.950}>{t}</Line>
        ))}
      </Lines>
      {highlights.map(([x, y, w, c], i) => (
        <Band key={i} $x={x + 1290} $y={y - 4} $w={w} $h={8} $c={c} $size={6} $r={3} />
      ))}
      <Lines $x={1867} $y={106} $size={7.150}>
        {transcript.map(([c, t], i) => (
          <Line key={i} $c={c}>{t}</Line>
        ))}
      </Lines>
      <Note $x={1765} $y={288} $w={81} $h={79} $c={PU} $size={5.800} $lh={7.500} $fixed>{"Thay vui thì chán rồi\nkhi nhắc lại quá khứ\nmọi thứ của bị lập\nthân mình chỉ lên\nthấp hay là đến sẽ\nthành vậy thì cứ cứ\n“ngon ạ”"}</Note>
      <Note $x={1758} $y={546} $w={82} $h={80} $c={PU} $size={7.600} $lh={12} $fixed>{"Phản hồi của Linh"}</Note>
      <Overlay width="2600" height="700" viewBox="0 0 2600 700">
        <path d="M1850 328h11v8h-4l-2 4-2-4h-3z" fill="#4b9bff" />
        <path d="M1856 535l2.500 5 5.500.8-4 4 1 5.500-5-2.600-5 2.600 1-5.500-4-4 5.500-.8zM1851 583l2.500 5 5.500.8-4 4 1 5.500-5-2.600-5 2.600 1-5.500-4-4 5.500-.8z" fill="#ffc41f" />
      </Overlay>
    </Canvas>
  </Embed>
);

const FigmaLink = ({ title }: { title: string }) => (
  <LinkCard>
    <FigmaLogo width={31} />
    <LinkText>
      <LinkTitle>{title}</LinkTitle>
      <LinkHost>www.figma.com</LinkHost>
    </LinkText>
    <ConnectButton>
      <FigmaLogo width={16.500} />
      Connect to Figma to update
    </ConnectButton>
  </LinkCard>
);

export default function App() {
  return (
    <Screen>
      <GlobalStyle />
      <BoardPane>
        {columns.map((col) => (
          <Column key={col.name}>
            <ColumnHead>
              <ColumnName>{col.name}</ColumnName>
              {col.count && <Count>{col.count}</Count>}
              {col.actions && (
                <HeadActions>
                  <Dots />
                  <Plus />
                </HeadActions>
              )}
            </ColumnHead>
            <Stack>
              {col.cards.map((card) => {
                const Icon = icons[card.icon];
                return (
                  <Card key={card.title} $selected={card.selected}>
                    <TitleRow>
                      <IconSlot>
                        <Icon />
                      </IconSlot>
                      <CardTitle>{card.title}</CardTitle>
                    </TitleRow>
                    <Tag $tone={card.tag}>{card.tag}</Tag>
                    <Desc>{card.text}</Desc>
                  </Card>
                );
              })}
              {col.actions && <NextCardEdge />}
            </Stack>
            {col.add && (
              <NewButton>
                <Plus />
                New
              </NewButton>
            )}
          </Column>
        ))}
      </BoardPane>
      <DocPane>
        <DocTitle>A. Product Discovery</DocTitle>
        <DocSubtitle>User interview, Synthesis, Job map</DocSubtitle>
        <Bullet $top={20.500}>Lâm Vũ Thái Ngọc (Batch 1)</Bullet>
        <FigmaLink title="BPM - BTCK - Nhóm 1" />
        <InterviewBoard />
        <Bullet $top={10.500}>Son Tran (Batch 2)</Bullet>
        <FigmaLink title="[BPM] Sơn" />
        <JtbdBoard />
      </DocPane>
      <Speck />
      <Marker $x={50} $y={366} $w={395.500} $h={218} />
      <Marker $x={1056.500} $y={92} $w={902.500} $h={929} />
    </Screen>
  );
}
